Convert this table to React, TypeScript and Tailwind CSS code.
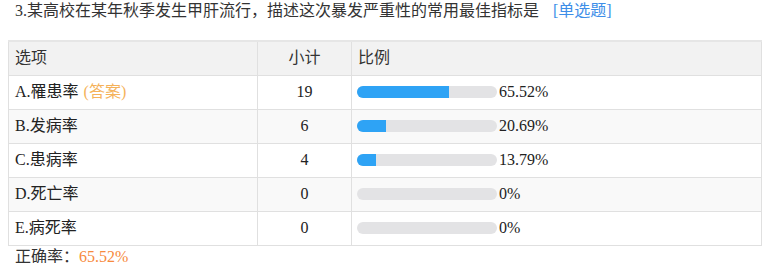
import React from 'react';

type Row = {
    label: string;
    count: number;
    percent: number;
    answer?: boolean;
};

const rows: Row[] = [
    { label: 'A.罹患率', count: 19, percent: 65.52, answer: true },
    { label: 'B.发病率', count: 6, percent: 20.69 },
    { label: 'C.患病率', count: 4, percent: 13.79 },
    { label: 'D.死亡率', count: 0, percent: 0 },
    { label: 'E.病死率', count: 0, percent: 0 },
];

export default function App() {
    return (
        <div className="bg-white w-[768px] h-[263px] overflow-hidden text-[16px] text-[#333] font-['Liberation_Serif','Noto_Sans_CJK_SC',serif]">
            <div className="pl-[15px] h-[24px] leading-[22px]">
                3.某高校在某年秋季发生甲肝流行，描述这次暴发严重性的常用最佳指标是
                <span className="ml-[14px] text-[#3d8ee8]">[单选题]</span>
            </div>

            <table className="ml-[8px] mt-[16px] w-[754px] border-collapse">
                <thead>
                    <tr className="bg-[#f2f2f2] h-[34px] border-t-2 border-[#e6e6e6]">
                        <th className="border border-[#e0e0e0] font-normal text-left pl-[6px] w-[249px]">选项</th>
                        <th className="border border-[#e0e0e0] font-normal text-center w-[94px]">小计</th>
                        <th className="border border-[#e0e0e0] font-normal text-left pl-[6px]">比例</th>
                    </tr>
                </thead>
                <tbody>
                    {rows.map((r, i) => (
                        <tr key={r.label} className={`h-[34px] ${i % 2 === 1 ? 'bg-[#f9f9f9]' : 'bg-white'}`}>
                            <td className="border border-[#e0e0e0] pl-[6px] text-[#222]">
                                {r.label}
                                {r.answer && <span className="ml-[5px] text-[#f5b25a]">(答案)</span>}
                            </td>
                            <td className="border border-[#e0e0e0] text-center text-[#222]">{r.count}</td>
                            <td className="border border-[#e0e0e0] pl-[5px]">
                                <div className="flex items-center">
                                    <div className="w-[140px] h-[12px] rounded-full bg-[#e3e3e5] overflow-hidden">
                                        <div className="h-full bg-[#2ea3f5]" style={{ width: `${r.percent}%` }} />
                                    </div>
                                    <span className="ml-[2px] text-[#222]">{r.percent === 0 ? '0' : r.percent.toFixed(2)}%</span>
                                </div>
                            </td>
                        </tr>
                    ))}
                </tbody>
            </table>

            <div className="pl-[15px] leading-[22px]">
                正确率：<span className="text-[#f78a3d]">65.52%</span>
            </div>
        </div>
    );
}
